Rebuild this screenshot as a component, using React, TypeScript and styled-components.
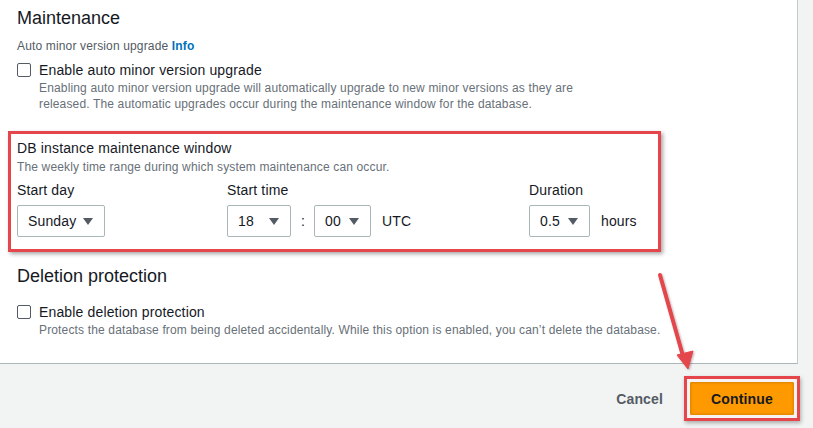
import React from "react";
import styled, { createGlobalStyle } from "styled-components";

const GlobalStyle = createGlobalStyle`
  html, body { margin: 0; padding: 0; }
  body {
    background: #f2f3f3;
    font-family: "Liberation Sans", Arial, sans-serif;
    color: #16191f;
    letter-spacing: 0.15px;
  }
`;

const Page = styled.div`
  position: relative;
  width: 813px;
  height: 428px;
  overflow: hidden;
  background: #f2f3f3;
  display: flex;
  flex-direction: column;
`;

const Panel = styled.div`
  box-sizing: border-box;
  width: 798px;
  height: 364px;
  background: #fff;
  border-right: 1px solid #c6c9cc;
  border-bottom: 1px solid #aab7b8;
  padding: 7px 17px 0 17px;
  display: flex;
  flex-direction: column;
`;

const Heading = styled.h2<{ $mt?: number }>`
  margin: ${(p) => p.$mt ?? 0}px 0 0 0;
  font-size: 18px;
  line-height: 22px;
  font-weight: 400;
  letter-spacing: 0;
  color: #16191f;
`;

const FieldLabel = styled.div`
  margin-top: 9px;
  font-size: 12px;
  line-height: 16px;
  color: #545b64;
`;

const InfoLink = styled.span`
  color: #0073bb;
  font-weight: 700;
`;

const CheckRow = styled.label<{ $mt: number }>`
  margin-top: ${(p) => p.$mt}px;
  display: flex;
  align-items: center;
  gap: 8px;
  font-size: 14px;
  line-height: 20px;
  color: #16191f;
`;

const Box = styled.span`
  box-sizing: border-box;
  width: 14px;
  height: 14px;
  border: 1px solid #545b64;
  border-radius: 2px;
  background: #fff;
  flex: none;
`;

const Description = styled.p<{ $maxW: number }>`
  margin: 0 0 0 22px;
  font-size: 12px;
  line-height: 16px;
  color: #687078;
  max-width: ${(p) => p.$maxW}px;
`;

const Highlight = styled.div`
  box-sizing: border-box;
  margin: 19px 0 0 -9px;
  width: 653px;
  border: 3px solid #e4464c;
  box-shadow: 2px 2px 4px rgba(0, 0, 0, 0.35);
  padding: 4px 6px 12px 6px;
  display: flex;
  flex-direction: column;
`;

const GroupTitle = styled.div`
  font-size: 14px;
  line-height: 20px;
  color: #16191f;
`;

const GroupHint = styled.div`
  margin-top: 1px;
  font-size: 12px;
  line-height: 16px;
  color: #687078;
`;

const Fields = styled.div`
  margin-top: 5px;
  display: grid;
  grid-template-columns: 210px 302px auto;
`;

const Field = styled.div`
  display: flex;
  flex-direction: column;
  gap: 5px;
`;

const Label = styled.div`
  font-size: 14px;
  line-height: 20px;
  color: #16191f;
`;

const Controls = styled.div`
  display: flex;
  align-items: center;
  height: 32px;
`;

const Select = styled.div<{ $w: number }>`
  box-sizing: border-box;
  width: ${(p) => p.$w}px;
  height: 32px;
  border: 1px solid #aab7b8;
  border-radius: 2px;
  background: #fff;
  display: flex;
  align-items: center;
  justify-content: space-between;
  padding: 0 11px 0 10px;
  font-size: 14px;
  color: #16191f;
`;

const Caret = styled.span`
  width: 0;
  height: 0;
  border-left: 5px solid transparent;
  border-right: 5px solid transparent;
  border-top: 7px solid #545b64;
`;

const Sep = styled.span<{ $ml: number; $mr: number }>`
  margin: 0 ${(p) => p.$mr}px 0 ${(p) => p.$ml}px;
  font-size: 14px;
  color: #16191f;
`;

const Footer = styled.div`
  flex: 1;
  display: flex;
  align-items: center;
  justify-content: flex-end;
  padding: 5px 13px 0 0;
  gap: 21px;
`;

const TextButton = styled.span`
  font-size: 14px;
  font-weight: 700;
  color: #545b64;
`;

const PrimaryFrame = styled.div`
  box-sizing: border-box;
  border: 3px solid #e4464c;
  padding: 3px;
  background: #f7f3f3;
  box-shadow: 1px 2px 4px rgba(0, 0, 0, 0.3);
`;

const PrimaryButton = styled.button`
  display: block;
  width: 104px;
  height: 33px;
  border: 1px solid #e68a00;
  border-radius: 1px;
  background: #ff9900;
  font-family: "Liberation Sans", Arial, sans-serif;
  font-size: 14px;
  font-weight: 700;
  letter-spacing: 0.15px;
  color: #16191f;
  box-shadow: inset 0 0 2px rgba(0, 0, 0, 0.2);
`;

const ArrowLayer = styled.svg`
  position: absolute;
  left: 0;
  top: 0;
  pointer-events: none;
`;

const SelectBox = ({ w, value }: { w: number; value: string }) => (
  <Select $w={w}>
    <span>{value}</span>
    <Caret />
  </Select>
);

export default function App() {
  return (
    <>
      <GlobalStyle />
      <Page>
        <Panel>
          <Heading>Maintenance</Heading>
          <FieldLabel>
            Auto minor version upgrade <InfoLink>Info</InfoLink>
          </FieldLabel>
          <CheckRow $mt={6}>
            <Box />
            Enable auto minor version upgrade
          </CheckRow>
          <Description $maxW={560}>
            Enabling auto minor version upgrade will automatically upgrade to new minor versions as they are
            released. The automatic upgrades occur during the maintenance window for the database.
          </Description>

          <Highlight>
            <GroupTitle>DB instance maintenance window</GroupTitle>
            <GroupHint>The weekly time range during which system maintenance can occur.</GroupHint>
            <Fields>
              <Field>
                <Label>Start day</Label>
                <Controls>
                  <SelectBox w={88} value="Sunday" />
                </Controls>
              </Field>
              <Field>
                <Label>Start time</Label>
                <Controls>
                  <SelectBox w={64} value="18" />
                  <Sep $ml={10} $mr={9}>:</Sep>
                  <SelectBox w={57} value="00" />
                  <Sep $ml={11} $mr={0}>UTC</Sep>
                </Controls>
              </Field>
              <Field>
                <Label>Duration</Label>
                <Controls>
                  <SelectBox w={61} value="0.5" />
                  <Sep $ml={11} $mr={0}>hours</Sep>
                </Controls>
              </Field>
            </Fields>
          </Highlight>

          <Heading $mt={13}>Deletion protection</Heading>
          <CheckRow $mt={15}>
            <Box />
            Enable deletion protection
          </CheckRow>
          <Description $maxW={660}>
            Protects the database from being deleted accidentally. While this option is enabled, you can’t delete the database.
          </Description>
        </Panel>
        <Footer>
          <TextButton>Cancel</TextButton>
          <PrimaryFrame>
            <PrimaryButton>Continue</PrimaryButton>
          </PrimaryFrame>
        </Footer>
        <ArrowLayer width="813" height="428" viewBox="0 0 813 428">
          <defs>
            <filter id="sh" x="-50%" y="-50%" width="200%" height="200%">
              <feDropShadow dx="1" dy="1" stdDeviation="1" floodColor="#000" floodOpacity="0.3" />
            </filter>
          </defs>
          <g filter="url(#sh)" fill="#e4464c" stroke="#e4464c">
            <line x1="660" y1="275" x2="683" y2="356" strokeWidth="4" strokeLinecap="round" />
            <polygon points="688,369 677,355 693,351" strokeWidth="1" strokeLinejoin="round" />
          </g>
        </ArrowLayer>
      </Page>
    </>
  );
}
